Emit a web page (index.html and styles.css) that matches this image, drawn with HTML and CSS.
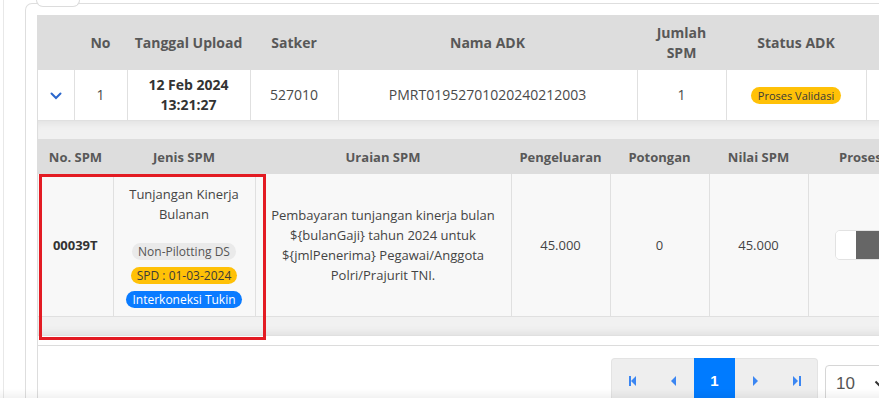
FILE: index.html
```html
<!DOCTYPE html>
<html lang="id">
<head>
    <meta charset="UTF-8">
    <meta name="viewport" content="width=device-width, initial-scale=1.0">
    <title>Daftar ADK</title>
    <link rel="stylesheet" href="styles.css">
</head>
<body>
    <div class="shell">
        <div class="card">
            <div class="tab"></div>

            <div class="grid-box">
                <!-- Tabel ADK -->
                <table class="adk">
                    <colgroup>
                        <col style="width:36px"><col style="width:53px"><col style="width:123px"><col style="width:88px">
                        <col style="width:299px"><col style="width:89px"><col style="width:140px"><col style="width:160px">
                    </colgroup>
                    <thead>
                        <tr>
                            <th></th>
                            <th>No</th>
                            <th>Tanggal Upload</th>
                            <th>Satker</th>
                            <th>Nama ADK</th>
                            <th>Jumlah<br>SPM</th>
                            <th>Status ADK</th>
                            <th></th>
                        </tr>
                    </thead>
                    <tbody>
                        <tr class="row-main">
                            <td>
                                <svg class="chevron" width="12" height="8" viewBox="0 0 12 8"><path d="M1.5 1.5 L6 6 L10.5 1.5" fill="none" stroke="#2a66cc" stroke-width="2" stroke-linecap="round"/></svg>
                            </td>
                            <td>1</td>
                            <td class="strong">12 Feb 2024<br>13:21:27</td>
                            <td>527010</td>
                            <td>PMRT01952701020240212003</td>
                            <td>1</td>
                            <td><span class="badge badge-warning small">Proses Validasi</span></td>
                            <td></td>
                        </tr>
                        <tr class="row-detail">
                            <td colspan="8">
                                <div class="detail">
                                    <!-- Tabel SPM -->
                                    <table class="spm">
                                        <colgroup>
                                            <col style="width:75px"><col style="width:142px"><col style="width:256px"><col style="width:99px">
                                            <col style="width:99px"><col style="width:99px"><col style="width:111px"><col style="width:110px">
                                        </colgroup>
                                        <thead>
                                            <tr>
                                                <th>No. SPM</th>
                                                <th>Jenis SPM</th>
                                                <th>Uraian SPM</th>
                                                <th>Pengeluaran</th>
                                                <th>Potongan</th>
                                                <th>Nilai SPM</th>
                                                <th class="th-proses">Proses</th>
                                                <th></th>
                                            </tr>
                                        </thead>
                                        <tbody>
                                            <tr>
                                                <td class="strong">00039T</td>
                                                <td>
                                                    <div class="jenis">
                                                        <div class="jenis-name">Tunjangan Kinerja<br>Bulanan</div>
                                                        <span class="badge badge-light">Non-Pilotting DS</span>
                                                        <span class="badge badge-warning">SPD : 01-03-2024</span>
                                                        <span class="badge badge-primary">Interkoneksi Tukin</span>
                                                    </div>
                                                </td>
                                                <td class="uraian">Pembayaran tunjangan kinerja bulan<br>${bulanGaji} tahun 2024 untuk<br>${jmlPenerima} Pegawai/Anggota<br>Polri/Prajurit TNI.</td>
                                                <td>45.000</td>
                                                <td>0</td>
                                                <td>45.000</td>
                                                <td>
                                                    <div class="toggle"><span class="toggle-off"></span><span class="toggle-on"></span></div>
                                                </td>
                                                <td></td>
                                            </tr>
                                        </tbody>
                                    </table>
                                    <div class="highlight"></div>
                                </div>
                            </td>
                        </tr>
                    </tbody>
                </table>

                <!-- Pagination -->
                <div class="pager-row">
                    <div class="pager">
                        <a href="#" class="page-btn">
                            <svg width="8" height="10" viewBox="0 0 8 10"><rect x="0" y="0" width="2" height="10" fill="#3b86f2"/><path d="M7 0 L2 5 L7 10 Z" fill="#3b86f2"/></svg>
                        </a>
                        <a href="#" class="page-btn">
                            <svg width="5" height="10" viewBox="0 0 5 10"><path d="M5 0 L0 5 L5 10 Z" fill="#3b86f2"/></svg>
                        </a>
                        <a href="#" class="page-btn active">1</a>
                        <a href="#" class="page-btn">
                            <svg width="5" height="10" viewBox="0 0 5 10"><path d="M0 0 L5 5 L0 10 Z" fill="#3b86f2"/></svg>
                        </a>
                        <a href="#" class="page-btn">
                            <svg width="8" height="10" viewBox="0 0 8 10"><path d="M0 0 L5 5 L0 10 Z" fill="#3b86f2"/><rect x="6" y="0" width="2" height="10" fill="#3b86f2"/></svg>
                        </a>
                    </div>
                    <div class="page-size">
                        <span>10</span>
                        <svg width="12" height="8" viewBox="0 0 12 8"><path d="M1.5 1.5 L6 6 L10.5 1.5" fill="none" stroke="#333" stroke-width="2"/></svg>
                    </div>
                </div>
            </div>
        </div>
    </div>
</body>
</html>
```

FILE: styles.css
```css
/* Global */
body, html {
    margin: 0;
    padding: 0;
    overflow: hidden;
    background: #fff;
    font-family: 'Open Sans', 'DejaVu Sans', sans-serif;
    color: #444;
}

body::after {
    content: '';
    position: fixed;
    left: 0;
    right: 0;
    bottom: 0;
    height: 9px;
    background: linear-gradient(rgba(0, 0, 0, 0), rgba(0, 0, 0, 0.05));
}

/* Frame */
.shell {
    margin-left: 3px;
    border-left: 1px solid #e8e8e8;
    padding: 3px 0 0 21px;
    height: 398px;
    box-sizing: border-box;
}

.card {
    position: relative;
    width: 1100px;
    height: 420px;
    border: 1px solid #dedede;
    border-bottom: none;
    border-radius: 7px 0 0 0;
    padding: 11px 0 0 11px;
    box-sizing: border-box;
}

.tab {
    position: absolute;
    left: 10px;
    top: -5px;
    width: 42px;
    height: 7px;
    background: #fff;
    border: 1px solid #dcdcdc;
    border-top: none;
    border-radius: 0 0 7px 7px;
}

.grid-box {
    border-left: 1px solid #ddd;
    height: 420px;
}

/* Tables */
table {
    border-collapse: collapse;
    table-layout: fixed;
}

.adk {
    width: 988px;
}

.adk th {
    height: 55px;
    padding: 0 6px;
    background: #dddddd;
    color: #585858;
    font-size: 14px;
    font-weight: bold;
    line-height: 20px;
    text-align: center;
}

.row-main td {
    height: 50px;
    padding: 0 6px;
    border: 1px solid #e0e0e0;
    border-top: none;
    font-size: 14px;
    line-height: 20px;
    color: #4a4a4a;
    text-align: center;
    vertical-align: middle;
}

.row-main td:first-child {
    border-left: none;
}

.strong {
    font-weight: bold;
    color: #333 !important;
}

.chevron {
    display: block;
    margin: 2px auto 0 6px;
}

.row-detail > td {
    padding: 0 0 9px 0;
    border-bottom: 1px solid #dcdcdc;
    background: #fff;
}

.detail {
    position: relative;
    padding: 18px 0;
    background: #f1f1f1;
    border-bottom: 1px solid #e0e0e0;
    box-shadow: inset 0 8px 8px -6px rgba(0, 0, 0, 0.07), inset 0 -8px 8px -6px rgba(0, 0, 0, 0.08);
}

.spm {
    width: 991px;
}

.spm th {
    height: 35px;
    padding: 0 4px;
    background: #dddddd;
    color: #585858;
    font-size: 13px;
    font-weight: bold;
    text-align: center;
    white-space: nowrap;
}

.spm th.th-proses {
    text-align: left;
    padding-left: 31px;
}

.spm td {
    height: 142px;
    padding: 0 6px;
    background: #f8f8f8;
    border: 1px solid #e0e0e0;
    border-top: none;
    font-size: 13px;
    line-height: 20px;
    color: #444;
    text-align: center;
    vertical-align: middle;
}

.spm td:first-child {
    border-left: none;
}

.jenis {
    display: flex;
    flex-direction: column;
    align-items: center;
    gap: 7px;
    padding-top: 2px;
}

.jenis-name {
    margin-bottom: 12px;
}

.uraian {
    padding: 0 4px !important;
}

/* Badges */
.badge {
    display: inline-block;
    padding: 0 6px;
    border-radius: 9px;
    font-size: 12px;
    line-height: 17px;
    white-space: nowrap;
}

.badge.small {
    font-size: 11px;
    padding: 0 7px;
    line-height: 17px;
}

.badge-light {
    background: #eaeaea;
    color: #555;
}

.badge-warning {
    background: #ffc107;
    color: #3a3a3a;
}

.badge-primary {
    background: #0a7bff;
    color: #fff;
}

/* Toggle */
.toggle {
    display: flex;
    width: 57px;
    height: 30px;
    margin: 0 auto;
    border: 1px solid #e2e2e2;
    border-radius: 5px;
    overflow: hidden;
    box-sizing: border-box;
}

.toggle-off {
    width: 20px;
    background: #fff;
}

.toggle-on {
    flex: 1;
    background: #666;
}

/* Red highlight */
.highlight {
    position: absolute;
    left: 1px;
    top: 53px;
    width: 227px;
    height: 166px;
    border: 3px solid #e31b23;
    box-sizing: border-box;
}

/* Pagination */
.pager-row {
    display: flex;
    align-items: flex-start;
    gap: 7px;
    padding: 12px 0 0 573px;
}

.pager {
    display: flex;
    height: 44px;
    background: #eeeeee;
    border: 1px solid #e3e3e3;
    border-bottom: none;
    border-radius: 4px 4px 0 0;
}

.page-btn {
    display: flex;
    align-items: center;
    justify-content: center;
    width: 41px;
    text-decoration: none;
}

.page-btn.active {
    margin-top: -1px;
    background: #007bff;
    color: #fff;
    font-family: 'Liberation Sans', sans-serif;
    font-weight: bold;
    font-size: 15px;
}

.page-size {
    display: flex;
    align-items: center;
    justify-content: space-between;
    width: 62px;
    height: 38px;
    margin-top: 7px;
    padding: 0 0 0 10px;
    border: 1px solid #d6d6d6;
    border-radius: 4px;
    font-family: 'Liberation Sans', sans-serif;
    font-size: 17px;
    color: #555;
    box-sizing: border-box;
}
```
